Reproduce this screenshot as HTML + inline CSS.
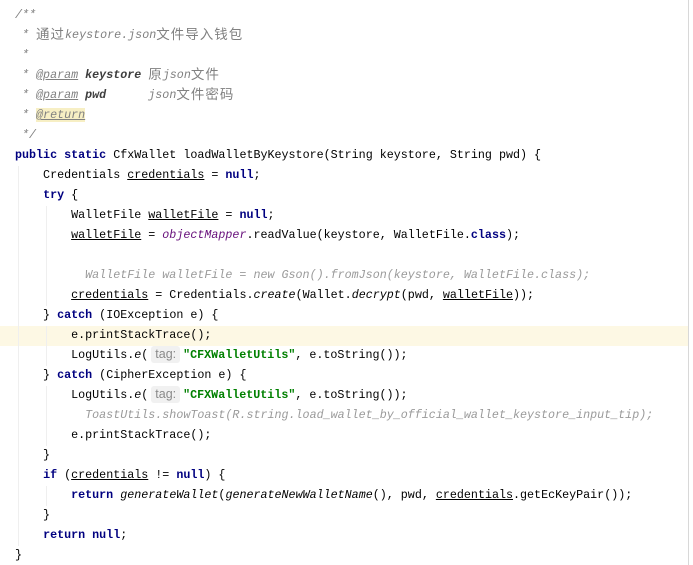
<!DOCTYPE html>
<html><head><meta charset="utf-8"><style>
body{margin:0;width:693px;height:565px;background:#fff;overflow:hidden;position:relative;font-family:"Liberation Mono","Noto Sans CJK SC",monospace;font-size:11.7px;color:#000}
.l{position:absolute;left:15px;height:20px;line-height:20px;white-space:pre}
.hl{position:absolute;left:0;width:688px;top:326px;height:20px;background:#fdf8e4}
.c{color:#808080;font-style:italic}
.cc{color:#9a9a9a;font-style:italic}
.k{color:#000080;font-weight:bold}
.s{color:#008000;font-weight:bold}
.u{text-decoration:underline}
.i{font-style:italic}
.tg{color:#808080;text-decoration:underline}
.tag{display:inline-block;font-family:"Liberation Sans",sans-serif;font-size:12.5px;color:#8a8a8a;background:#f1f1f1;border-radius:3px;padding:0 4px;line-height:17px;margin:0 3px 0 3px}
.cn{font-family:"Noto Sans CJK SC",sans-serif;font-style:normal;font-size:13.5px;letter-spacing:1px;line-height:1;display:inline-block;vertical-align:-1px}
.edge{position:absolute;left:688px;top:0;width:1px;height:565px;background:#d8d8d8}
.g{position:absolute;width:1px;background:#efefef}
</style></head><body>
<div class="hl"></div>
<div class="edge"></div>
<div class="g" style="left:18px;top:166px;height:380px"></div>
<div class="g" style="left:46px;top:206px;height:100px"></div>
<div class="g" style="left:46px;top:326px;height:40px"></div>
<div class="g" style="left:46px;top:386px;height:60px"></div>
<div class="g" style="left:46px;top:486px;height:20px"></div>
<div class="l c" style="top:5px">/**</div>
<div class="l c" style="top:25px"> * <span class="cn">通过</span>keystore.json<span class="cn">文件导入钱包</span></div>
<div class="l c" style="top:45px"> *</div>
<div class="l c" style="top:65px"> * <span class="tg">@param</span> <b style="color:#3d3d3d">keystore</b> <span class="cn">原</span>json<span class="cn">文件</span></div>
<div class="l c" style="top:85px"> * <span class="tg">@param</span> <b style="color:#3d3d3d">pwd</b>      json<span class="cn">文件密码</span></div>
<div class="l c" style="top:105px"> * <span class="tg" style="background:#f7efc4">@return</span></div>
<div class="l c" style="top:125px"> */</div>
<div class="l" style="top:145px"><span class="k">public static</span> CfxWallet loadWalletByKeystore(String keystore, String pwd) {</div>
<div class="l" style="top:165px">    Credentials <span class="u">credentials</span> = <span class="k">null</span>;</div>
<div class="l" style="top:185px">    <span class="k">try</span> {</div>
<div class="l" style="top:205px">        WalletFile <span class="u">walletFile</span> = <span class="k">null</span>;</div>
<div class="l" style="top:225px">        <span class="u">walletFile</span> = <span class="i" style="color:#660e7a">objectMapper</span>.readValue(keystore, WalletFile.<span class="k">class</span>);</div>
<div class="l cc" style="top:265px">          WalletFile walletFile = new Gson().fromJson(keystore, WalletFile.class);</div>
<div class="l" style="top:285px">        <span class="u">credentials</span> = Credentials.<span class="i">create</span>(Wallet.<span class="i">decrypt</span>(pwd, <span class="u">walletFile</span>));</div>
<div class="l" style="top:305px">    } <span class="k">catch</span> (IOException e) {</div>
<div class="l" style="top:325px">        e.printStackTrace();</div>
<div class="l" style="top:345px">        LogUtils.<span class="i">e</span>(<span class="tag">tag:</span><span class="s">"CFXWalletUtils"</span>, e.toString());</div>
<div class="l" style="top:365px">    } <span class="k">catch</span> (CipherException e) {</div>
<div class="l" style="top:385px">        LogUtils.<span class="i">e</span>(<span class="tag">tag:</span><span class="s">"CFXWalletUtils"</span>, e.toString());</div>
<div class="l cc" style="top:405px">          ToastUtils.showToast(R.string.load_wallet_by_official_wallet_keystore_input_tip);</div>
<div class="l" style="top:425px">        e.printStackTrace();</div>
<div class="l" style="top:445px">    }</div>
<div class="l" style="top:465px">    <span class="k">if</span> (<span class="u">credentials</span> != <span class="k">null</span>) {</div>
<div class="l" style="top:485px">        <span class="k">return</span> <span class="i">generateWallet</span>(<span class="i">generateNewWalletName</span>(), pwd, <span class="u">credentials</span>.getEcKeyPair());</div>
<div class="l" style="top:505px">    }</div>
<div class="l" style="top:525px">    <span class="k">return null</span>;</div>
<div class="l" style="top:545px">}</div>
</body></html>
